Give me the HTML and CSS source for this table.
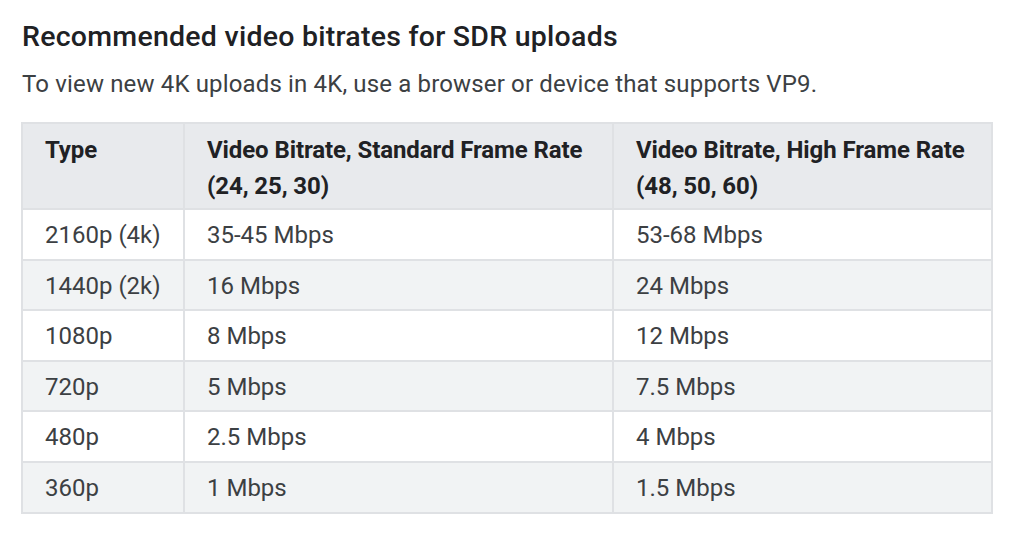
FILE: index.html
```html
<!DOCTYPE html>
<html lang="en">
<head>
    <meta charset="UTF-8">
    <meta name="viewport" content="width=device-width, initial-scale=1.0">
    <title>Recommended video bitrates</title>
    <link rel="stylesheet" href="styles.css">
</head>
<body>
    <div class="bitrates">
        <h2>Recommended video bitrates for SDR uploads</h2>
        <p class="note">To view new 4K uploads in 4K, use a browser or device that supports VP9.</p>
        <table>
            <thead>
                <tr>
                    <th class="col-type">Type</th>
                    <th class="col-std">Video Bitrate, Standard Frame Rate (24, 25, 30)</th>
                    <th>Video Bitrate, High Frame Rate (48, 50, 60)</th>
                </tr>
            </thead>
            <tbody>
                <tr><td>2160p (4k)</td><td>35-45 Mbps</td><td>53-68 Mbps</td></tr>
                <tr><td>1440p (2k)</td><td>16 Mbps</td><td>24 Mbps</td></tr>
                <tr><td>1080p</td><td>8 Mbps</td><td>12 Mbps</td></tr>
                <tr><td>720p</td><td>5 Mbps</td><td>7.5 Mbps</td></tr>
                <tr><td>480p</td><td>2.5 Mbps</td><td>4 Mbps</td></tr>
                <tr><td>360p</td><td>1 Mbps</td><td>1.5 Mbps</td></tr>
            </tbody>
        </table>
    </div>
</body>
</html>
```

FILE: styles.css
```css
body {
    margin: 0;
    font-family: Roboto, "Liberation Sans", sans-serif;
    color: #202124;
    background: #fff;
}

.bitrates {
    padding: 20px 31px 0 22px;
}

.bitrates h2 {
    margin: 0;
    font-size: 28.5px;
    font-weight: 500;
    line-height: 34px;
    letter-spacing: 0.25px;
}

.note {
    margin: 14px 0 0;
    font-size: 24px;
    line-height: 32px;
    letter-spacing: 0.15px;
    color: #3c4043;
}

table {
    margin-top: 22px;
    margin-left: -1px;
    width: 972px;
    table-layout: fixed;
    border-collapse: collapse;
    border: 2px solid #dfe1e4;
    font-size: 24px;
}

th, td {
    border: 2px solid #dfe1e4;
    padding: 0 20px 0 22px;
    text-align: left;
    vertical-align: top;
}

th {
    background: #e8eaed;
    font-weight: 700;
    line-height: 36px;
    padding-top: 8px;
    padding-bottom: 4px;
    letter-spacing: -0.1px;
    color: #202124;
}

td {
    line-height: 36px;
    padding-top: 7px;
    padding-bottom: 5.6px;
    color: #3c4043;
}

tbody tr:nth-child(even) td {
    background: #f1f3f4;
}

.col-type {
    width: 118px;
}

.col-std {
    width: 385px;
}
```
